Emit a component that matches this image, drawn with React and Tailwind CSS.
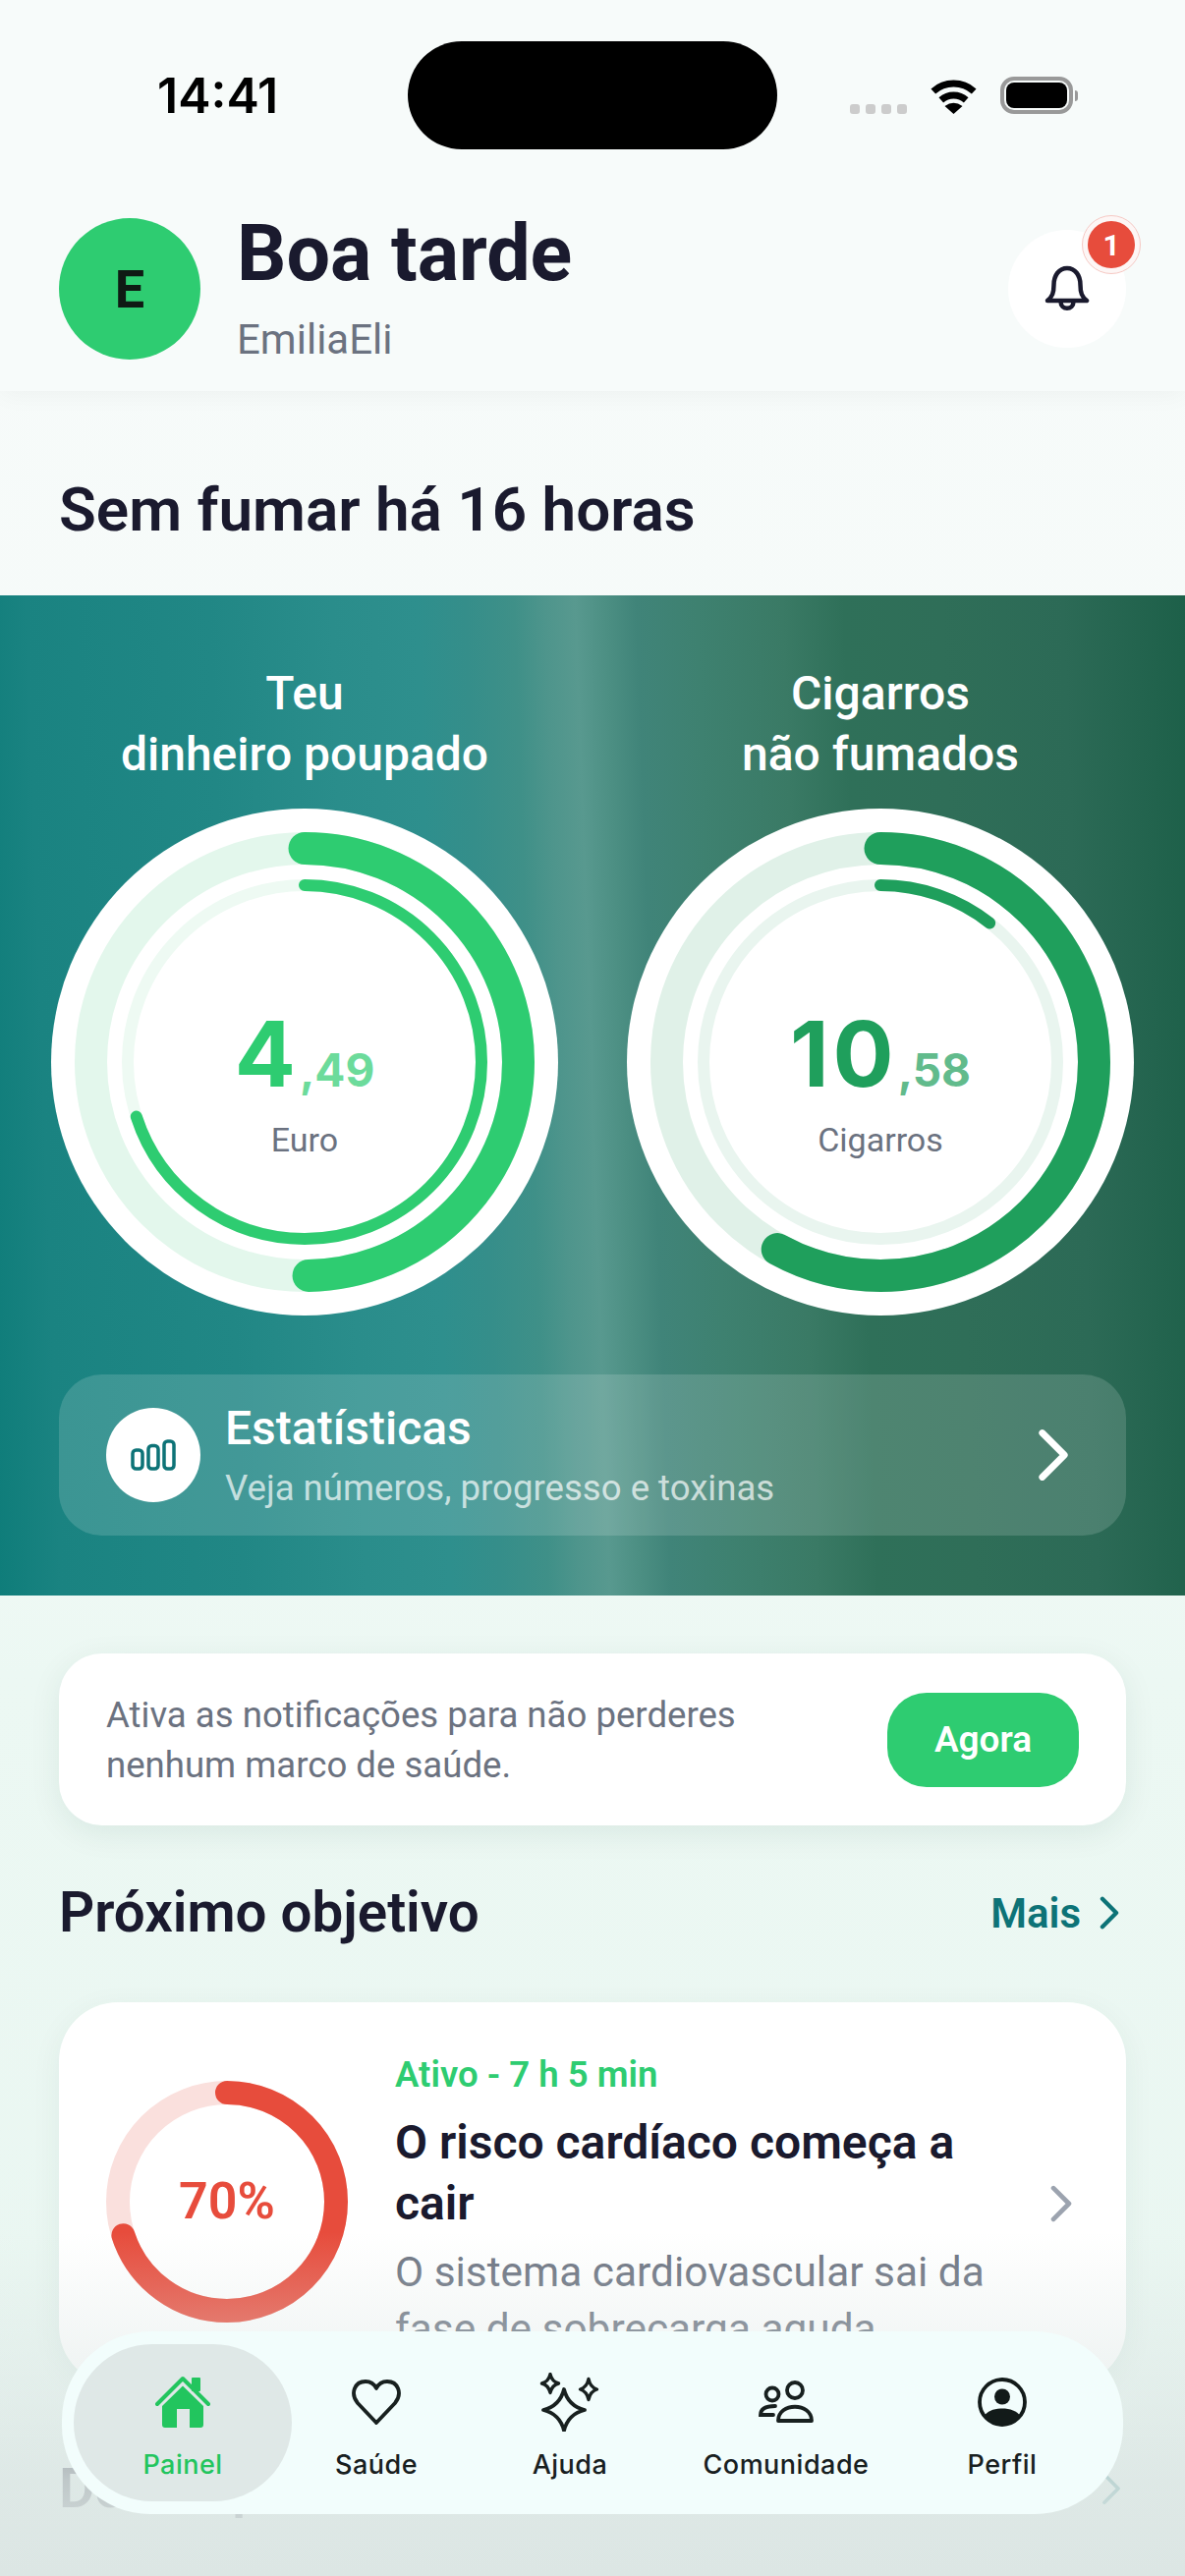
import React from 'react';

const ChevronRight = ({ className, strokeWidth = 5 }) => (
  <svg viewBox="0 0 28 48" fill="none" className={className}>
    <path d="M4 4 L24 24 L4 44" stroke="currentColor" strokeWidth={strokeWidth} strokeLinecap="round" strokeLinejoin="round" />
  </svg>
);

const Wifi = () => (
  <svg width="51" height="37" viewBox="0 0 51 37" fill="none">
    <path d="M4.8 14 A31 31 0 0 1 46.2 14" stroke="#000" strokeWidth="7" />
    <path d="M12.8 22.9 A19 19 0 0 1 38.2 22.9" stroke="#000" strokeWidth="7" />
    <path d="M25.5 37 L16.5 29 Q25.5 22.5 34.5 29 Z" fill="#000" />
  </svg>
);

const Bell = () => (
  <svg width="46" height="48" viewBox="0 0 46 48" fill="none" stroke="#1a1a2e" strokeWidth="4.5" strokeLinecap="round" strokeLinejoin="round">
    <path d="M3 36 C8 32 9.5 28 9.5 20 C9.5 10 15 3 23 3 C31 3 36.500 10 36.500 20 C36.500 28 38 32 43 36 Z" />
    <path d="M16.500 37 C16.500 46 29.500 46 29.500 37" />
  </svg>
);

const StatsIcon = () => (
  <svg width="46" height="32" viewBox="0 0 46 32" fill="none" stroke="#0d7377" strokeWidth="3.5">
    <rect x="2" y="11" width="10" height="19" rx="3.500" />
    <rect x="18" y="6.500" width="10" height="23.500" rx="3.500" />
    <rect x="34" y="2" width="10" height="28" rx="3.500" />
  </svg>
);

const star = (x, y, r, ry = r) =>
  `M${x} ${y - ry} Q${x + r * 0.2} ${y - ry * 0.2} ${x + r} ${y} Q${x + r * 0.2} ${y + ry * 0.2} ${x} ${y + ry} Q${x - r * 0.2} ${y + ry * 0.2} ${x - r} ${y} Q${x - r * 0.2} ${y - ry * 0.2} ${x} ${y - ry} Z`;

const HouseIcon = () => (
  <svg width="56" height="54" viewBox="0 0 56 54" fill="none">
    <rect x="37" y="2" width="9" height="14" rx="1" fill="#22c55e" />
    <path d="M2 29 L28 3 L54 29" stroke="#22c55e" strokeWidth="4" strokeLinecap="round" strokeLinejoin="round" />
    <path
      fillRule="evenodd"
      d="M28 10.500 L49 31 V50 Q49 53 46 53 H35 V34 H22 V53 H10 Q7 53 7 50 V31 Z"
      fill="#22c55e"
    />
  </svg>
);

const HeartIcon = () => (
  <svg width="50" height="46" viewBox="0 0 50 46" fill="none">
    <path
      d="M25 44 L6 24 C-2 14 3 2 14 2 C19 2 23 5 25 9 C27 5 31 2 36 2 C47 2 52 14 44 24 Z"
      stroke="#18201f"
      strokeWidth="3.800"
      strokeLinejoin="round"
    />
  </svg>
);

const SparkIcon = () => (
  <svg width="62" height="60" viewBox="0 0 62 60" fill="none" stroke="#18201f" strokeLinejoin="round">
    <path d={star(25, 38, 21, 21)} strokeWidth="3.800" />
    <path d={star(11, 11, 8.500, 9.500)} strokeWidth="3.400" />
    <path d={star(50, 17, 8.500, 10.500)} strokeWidth="3.400" />
  </svg>
);

const CommunityIcon = () => (
  <svg width="58" height="44" viewBox="0 0 58 44" fill="none" stroke="#18201f" strokeWidth="3.800" strokeLinecap="round">
    <circle cx="15" cy="14" r="6.500" />
    <circle cx="38" cy="10" r="8" />
    <path d="M21 41 C21 22 55 22 55 41 Z" strokeLinejoin="round" />
    <path d="M16 35 H3 C3 28 9 26 18 26" />
  </svg>
);

const ProfileIcon = () => (
  <svg width="50" height="50" viewBox="0 0 50 50">
    <circle cx="25" cy="25" r="23" fill="none" stroke="#121a19" strokeWidth="3.800" />
    <circle cx="25" cy="19.500" r="8" fill="#121a19" />
    <path d="M7 39 C12 29 38 29 43 39 C33 51 17 51 7 39 Z" fill="#121a19" />
  </svg>
);

const Gauge = ({ value, decimals, unit, outer, inner, color, trackOuter, trackInner }) => (
  <div className="relative flex h-[516px] w-[516px] flex-col items-center justify-center rounded-full bg-white">
    <svg viewBox="0 0 516 516" className="absolute inset-0 -rotate-90" fill="none">
      <circle cx="258" cy="258" r="217.500" stroke={trackOuter} strokeWidth="33" />
      <circle cx="258" cy="258" r="217.500" stroke={color} strokeWidth="33" strokeLinecap="round" pathLength="100" strokeDasharray={`${outer} 100`} />
      <circle cx="258" cy="258" r="180" stroke={trackInner} strokeWidth="12" />
      <circle cx="258" cy="258" r="180" stroke={color} strokeWidth="12" strokeLinecap="round" pathLength="100" strokeDasharray={`${inner} 100`} />
    </svg>
    <div className="mt-[45px] flex h-[88px] items-baseline font-[Inter,sans-serif] font-bold leading-none" style={{ color }}>
      <span className="text-[92px] tracking-[4px]">{value}</span>
      <span className="text-[46px] opacity-70">,{decimals}</span>
    </div>
    <span className="mt-[25px] text-[34px] leading-[40px] text-[#6b7280]">{unit}</span>
  </div>
);

const navItems = [
  { label: 'Painel', icon: <HouseIcon />, width: 'w-[222px]', active: true },
  { label: 'Saúde', icon: <HeartIcon />, width: 'w-[172px]' },
  { label: 'Ajuda', icon: <SparkIcon />, width: 'w-[222px]' },
  { label: 'Comunidade', icon: <CommunityIcon />, width: 'w-[218px]' },
  { label: 'Perfil', icon: <ProfileIcon />, width: 'w-[222px]' },
];

export default function App() {
  return (
    <div className="relative h-[2622px] w-[1206px] overflow-hidden bg-[linear-gradient(180deg,#f7fbfa_0%,#f5faf8_50%,#ecf8f3_65%,#e9f6f1_100%)] font-[Roboto,sans-serif] text-[#1a1a2e]">
      {/* header */}
      <header className="bg-[#f7fbfa] pb-[28px] shadow-[0_4px_24px_rgba(0,0,0,0.04)]">
        <div className="flex h-[152px] items-start pl-[160px] pt-[42px]">
          <span className="flex h-[110px] w-[255px] items-center font-[Inter,sans-serif] text-[50px] font-semibold text-black">14:41</span>
          <div className="h-[110px] w-[376px] rounded-full bg-black" />
          <div className="ml-[74px] flex h-[110px] items-center">
            <div className="mt-[28px] flex gap-[6px]">
              <span className="h-[10px] w-[10px] rounded-[3px] bg-[#cccccc]" />
              <span className="h-[10px] w-[10px] rounded-[3px] bg-[#cccccc]" />
              <span className="h-[10px] w-[10px] rounded-[3px] bg-[#cccccc]" />
              <span className="h-[10px] w-[10px] rounded-[3px] bg-[#cccccc]" />
            </div>
            <div className="ml-[22px]">
              <Wifi />
            </div>
            <div className="ml-[22px] flex items-center">
              <div className="h-[38px] w-[74px] rounded-[14px] border-[4px] border-[#999999] p-[2px]">
                <div className="h-full w-full rounded-[8px] bg-black" />
              </div>
              <div className="ml-[2px] h-[11px] w-[3px] rounded-r-full bg-[#999999]" />
            </div>
          </div>
        </div>
        <div className="mt-[66px] flex items-center justify-between px-[60px]">
          <div className="flex items-center gap-[37px]">
            <div className="flex h-[144px] w-[144px] items-center justify-center rounded-full bg-[#2ecc71] text-[54px] font-bold text-[#0f1a14]">E</div>
            <div>
              <div className="text-[79px] font-bold leading-[80px]">Boa tarde</div>
              <div className="mt-[24px] text-[42px] leading-[48px] text-[#6b7280]">EmiliaEli</div>
            </div>
          </div>
          <div className="relative flex h-[120px] w-[120px] items-center justify-center rounded-full bg-white">
            <Bell />
            <div className="absolute right-[-15px] top-[-15px] flex h-[60px] w-[60px] items-center justify-center rounded-full border border-[#f6c9c4] bg-[#fdf6f5] p-[5px]">
              <span className="flex h-full w-full items-center justify-center rounded-full bg-[#e74c3c] text-[30px] font-bold text-white">1</span>
            </div>
          </div>
        </div>
      </header>

      <h2 className="flex h-[208px] items-center px-[60px] pt-[32px] text-[62px] font-semibold">Sem fumar há 16 horas</h2>

      {/* hero */}
      <section className="bg-[linear-gradient(88deg,#0f7d7a_0%,#1a8381_5%,#218785_20%,#2a8d8b_30%,#2e8f8d_37%,#358e8a_41%,#3f9088_45%,#4e958c_47.5%,#58998f_50%,#4c8f83_52.5%,#408479_55%,#3e8170_60%,#3a7a65_67%,#2f7059_72%,#2f6e58_80%,#2c6a56_90%,#1d6049_100%)] px-[52px] pb-[61px] pt-[69px]">
        <div className="flex justify-between">
          <div className="flex w-[516px] flex-col items-center">
            <h3 className="text-center text-[48px] font-medium leading-[62px] text-white">Teu<br />dinheiro poupado</h3>
            <div className="mt-[24px]">
              <Gauge value="4" decimals="49" unit="Euro" outer={49.7} inner={70} color="#2ecc71" trackOuter="#e3f7ec" trackInner="#eefaf3" />
            </div>
          </div>
          <div className="flex w-[516px] flex-col items-center">
            <h3 className="text-center text-[48px] font-medium leading-[62px] text-white">Cigarros<br />não fumados</h3>
            <div className="mt-[24px]">
              <Gauge value="10" decimals="58" unit="Cigarros" outer={58} inner={10.6} color="#1f9f5c" trackOuter="#e0f1e8" trackInner="#e9f5ef" />
            </div>
          </div>
        </div>
        <div className="mx-[8px] mt-[60px] flex h-[164px] items-center justify-between rounded-[44px] bg-white/15 pl-[48px] pr-[58px]">
          <div className="flex items-center gap-[25px]">
            <div className="flex h-[96px] w-[96px] items-center justify-center rounded-full bg-white">
              <StatsIcon />
            </div>
            <div>
              <div className="text-[48px] font-medium leading-[56px] text-white">Estatísticas</div>
              <div className="mt-[11px] text-[36.6px] leading-[44px] text-white/70">Veja números, progresso e toxinas</div>
            </div>
          </div>
          <ChevronRight className="h-[54px] w-[32px] text-white" strokeWidth={6} />
        </div>
      </section>

      <main className="px-[60px] pt-[59px]">
        <div className="flex h-[175px] items-center justify-between rounded-[44px] bg-white pl-[48px] pr-[48px] shadow-[0_8px_32px_rgba(0,60,50,0.08)]">
          <p className="text-[36.6px] leading-[51px] text-[#6b7280]">Ativa as notificações para não perderes<br />nenhum marco de saúde.</p>
          <button className="h-[96px] w-[195px] rounded-[40px] bg-[#2ecc71] text-[37px] font-semibold text-white">Agora</button>
        </div>

        <div className="mt-[54px] flex h-[70px] items-center justify-between">
          <h2 className="text-[56.5px] font-semibold">Próximo objetivo</h2>
          <div className="flex items-center gap-[18px] pr-[6px] text-[#0d7377]">
            <span className="text-[42px] font-semibold">Mais</span>
            <ChevronRight className="h-[34px] w-[22px]" strokeWidth={6} />
          </div>
        </div>

        {/* goal card */}
        <div className="relative mt-[56px] flex h-[390px] items-start rounded-[60px] bg-white pl-[48px] pr-[54px] pt-[49px] shadow-[0_8px_32px_rgba(0,60,50,0.06)]">
          <div className="relative mt-[31px] flex h-[246px] w-[246px] shrink-0 items-center justify-center">
            <svg viewBox="0 0 246 246" className="absolute inset-0 -rotate-90" fill="none">
              <circle cx="123" cy="123" r="111" stroke="#fae0dd" strokeWidth="24" />
              <circle cx="123" cy="123" r="111" stroke="#e74c3c" strokeWidth="24" strokeLinecap="round" pathLength="100" strokeDasharray="70 100" />
            </svg>
            <span className="text-[52px] font-semibold text-[#e74c3c]">70%</span>
          </div>
          <div className="ml-[48px] flex-1">
            <div className="text-[36.6px] font-semibold leading-[50px] text-[#2ecc71]">Ativo - 7 h 5 min</div>
            <div className="mt-[13px] text-[48px] font-semibold leading-[62px]">O risco cardíaco começa a<br />cair</div>
            <div className="mt-[10px] text-[42.4px] leading-[58px] text-[#6b7280]">O sistema cardiovascular sai da<br />fase de sobrecarga aguda</div>
          </div>
          <ChevronRight className="mt-[137px] h-[38px] w-[24px] shrink-0 text-[#9ca3af]" strokeWidth={6} />
        </div>

        <div className="mt-[70px] flex h-[70px] items-center justify-between">
          <h2 className="text-[56px] font-semibold">Do teu percurso</h2>
          <ChevronRight className="mr-[4px] h-[34px] w-[22px] text-[#0d7377]" strokeWidth={5} />
        </div>
      </main>

      {/* bottom fade + nav */}
      <div className="absolute inset-x-0 bottom-0 h-[350px] bg-[linear-gradient(180deg,rgba(220,230,228,0)_0%,rgba(220,230,228,0.5)_45%,rgba(220,230,228,0.85)_72%,rgba(220,230,228,1)_100%)]" />
      <nav className="absolute left-[63px] top-[2373px] flex h-[186px] w-[1080px] items-center rounded-[90px] bg-[#f2fdfc] pl-[12px]">
        {navItems.map((item) => (
          <div
            key={item.label}
            className={`flex h-[160px] ${item.width} flex-col items-center rounded-[80px] pt-[29px] ${item.active ? 'bg-[#dfe8e7] text-[#22c55e]' : 'text-[#18201f]'}`}
          >
            <div className="flex h-[60px] items-center justify-center">{item.icon}</div>
            <span className="mt-[16px] font-[Inter,sans-serif] text-[27px] font-medium leading-[36px] tracking-[0.5px]">{item.label}</span>
          </div>
        ))}
      </nav>
    </div>
  );
}
